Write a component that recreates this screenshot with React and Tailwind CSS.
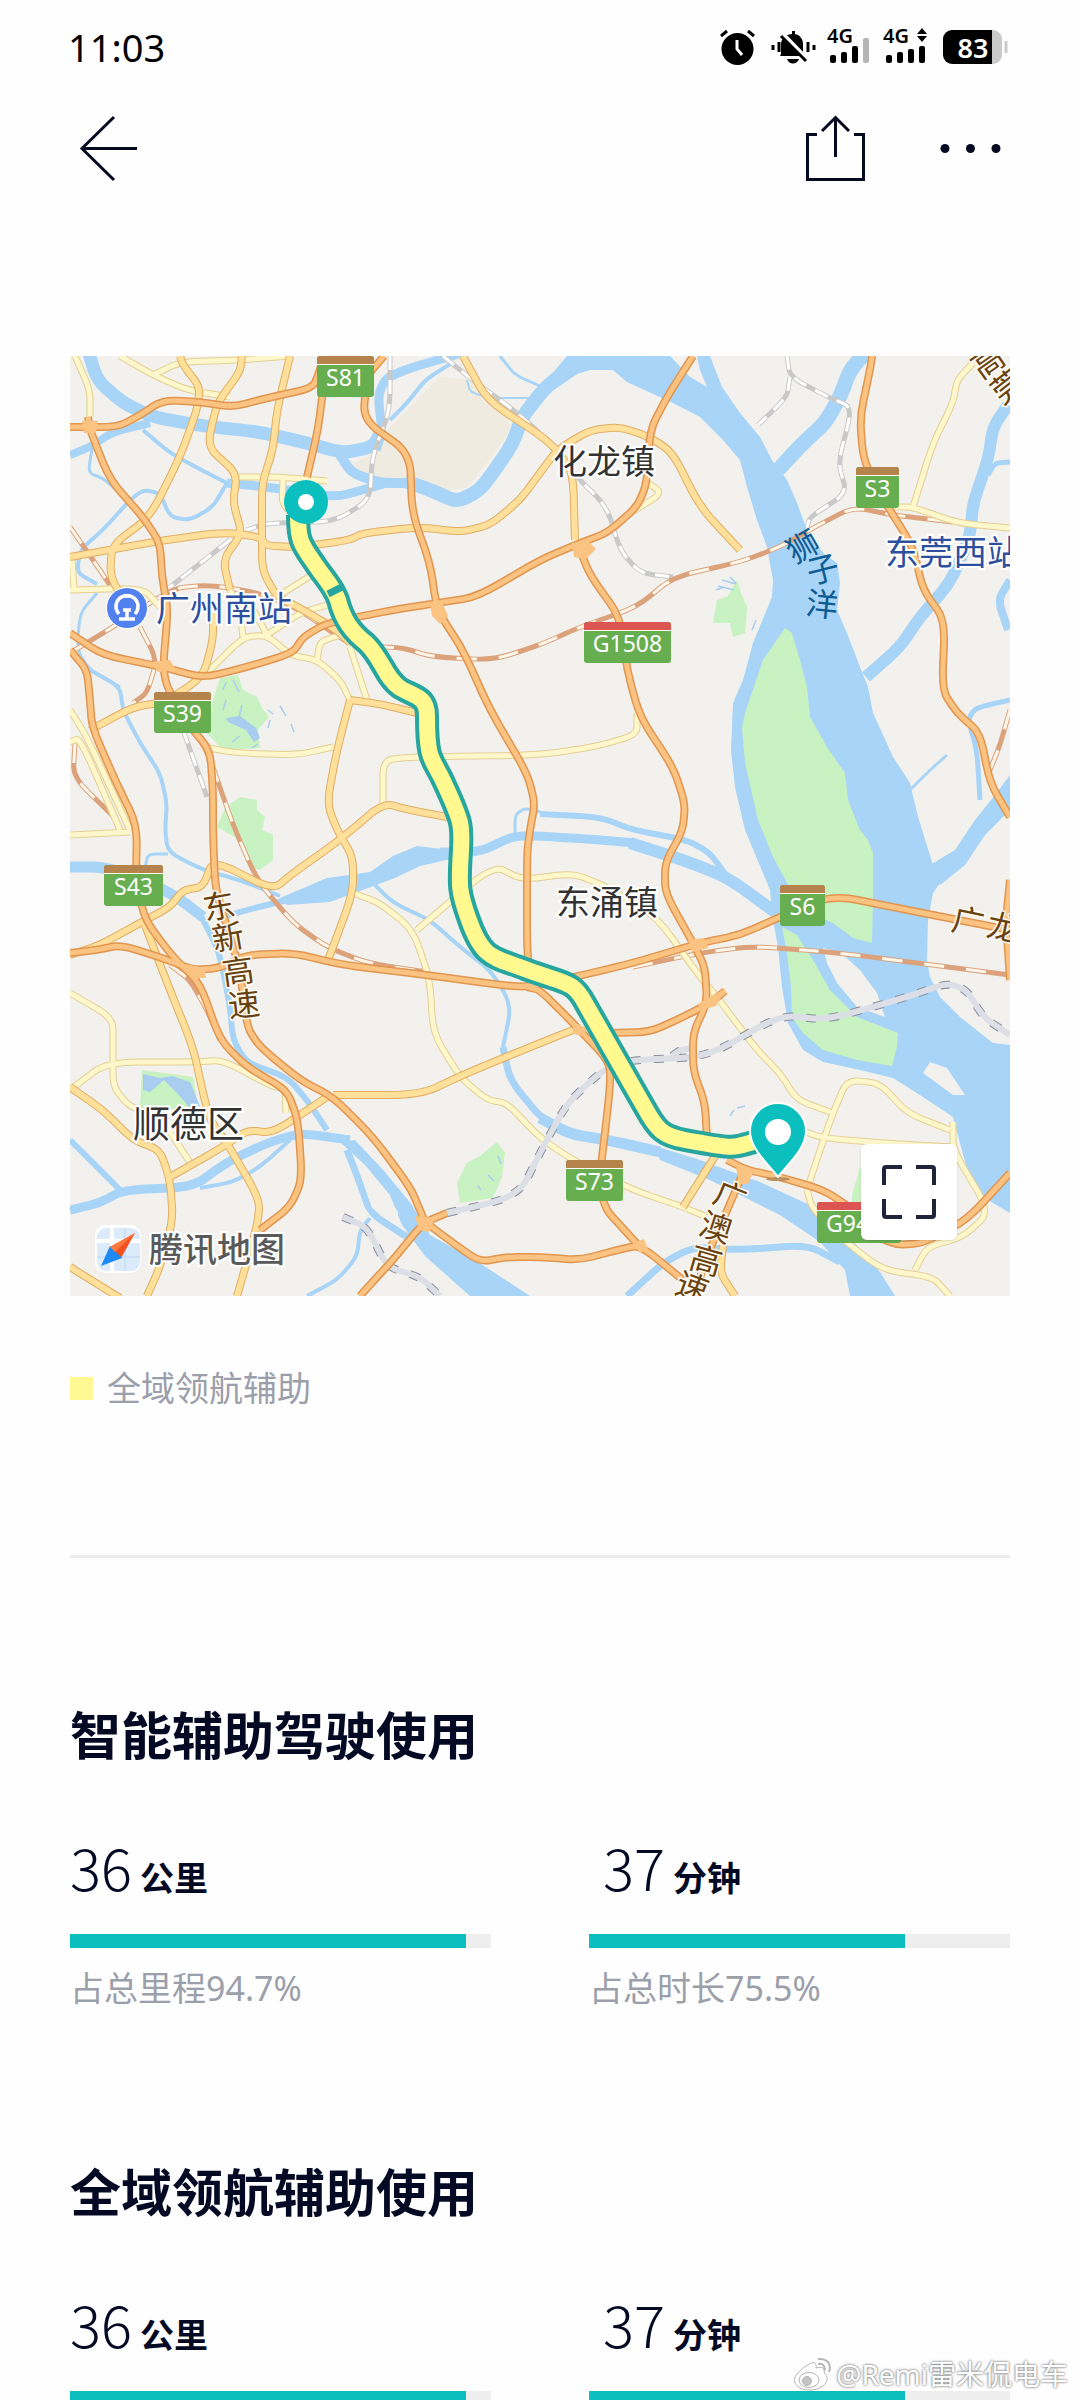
const FONT = "font-['Noto_Sans','Noto_Sans_CJK_SC',sans-serif]";

const WATER_AREAS = [
    // main estuary
    "567,356 540,388 545,396 583,370 613,370 627,382 673,403 700,417 723,440 740,460 747,487 757,520 767,547 773,580 772,597 753,643 743,680 733,703 731,750 735,787 745,830 770,890 773,920 778,947 782,987 788,1023 803,1050 823,1062 860,1070 893,1078 923,1097 953,1117 960,1143 970,1180 983,1197 1010,1213 1010,1045 993,1043 960,1017 940,997 930,977 927,960 928,920 933,893 942,880 933,865 923,833 917,813 910,783 893,757 873,713 868,687 860,667 847,633 837,610 840,583 837,563 823,553 807,530 797,503 787,480 773,462 760,437 740,413 722,387 710,356 697,356 700,370 707,387 690,377 670,356",
    "1010,775 995,795 975,820 955,850 930,865 940,885 965,865 985,835 1010,810",
    "340,1142 355,1140 385,1172 412,1205 430,1235 475,1260 530,1296 470,1296 425,1256 402,1225 390,1195 365,1165",
    "655,1146 700,1160 760,1182 812,1206 850,1238 880,1272 895,1296 850,1296 845,1270 820,1242 780,1215 710,1180 660,1160",
    "370,872 393,856 417,846 450,850 455,858 420,866 395,878 330,902 287,905 280,898 327,878",
];

const RIVERS = [
    { w: 13, pts: "88,350 97,380 123,403 153,417 203,426 260,432 307,443 343,453 373,447 382,430" },
    { w: 9,  pts: "376,450 382,432 378,395 386,378 410,368 445,358 470,350" },
    { w: 4,  pts: "390,420 408,402 425,380 450,364" },
    { w: 10, pts: "340,455 352,473 380,483 413,483" },
    { w: 14, pts: "405,481 433,491 457,502 480,490 497,467 513,443 522,417 545,388 567,370 592,362" },
    { w: 8,  pts: "70,455 90,447 113,432 150,423" },
    { w: 4,  pts: "143,430 170,453 207,473 227,483" },
    { w: 9,  pts: "227,483 267,487 300,492 337,497 373,487 390,482" },
    { w: 4,  pts: "227,483 213,507 190,520 170,517 160,493 143,490 130,500 103,530 80,550 77,573 97,584" },
    { w: 3,  pts: "93,443 88,473 103,478 127,500" },
    { w: 3,  pts: "97,593 80,613 77,650 90,670 120,687" },
    { w: 4,  pts: "90,670 120,687 123,710 140,743 160,773 167,803 165,830 168,852 203,870 240,880 280,896" },
    { w: 3,  pts: "145,868 148,854 168,854" },
    { w: 11, pts: "70,867 103,867 140,878 177,897 203,917" },
    { w: 6,  pts: "200,914 217,947 223,970 230,1007 233,1040 247,1063 287,1077 307,1100 327,1130" },
    { w: 6,  pts: "223,917 247,910 287,900" },
    { w: 9,  pts: "440,852 480,852 513,836 540,836 600,840 635,843" },
    { w: 12, pts: "630,843 683,860 727,877 775,912" },
    { w: 3,  pts: "515,835 515,815 525,808 540,812" },
    { w: 6,  pts: "540,814 600,817 633,830 687,840 710,853 728,878" },
    { w: 4,  pts: "370,880 393,903 430,920 460,947 490,970 507,997 510,1013 503,1047" },
    { w: 7,  pts: "503,1047 510,1080 540,1117 560,1128" },
    { w: 11, pts: "540,1118 570,1134 607,1140 660,1152" },
    { w: 7,  pts: "627,1296 663,1263 693,1247 740,1250 807,1245 840,1262" },
    { w: 6,  pts: "70,1140 93,1163 120,1190" },
    { w: 9,  pts: "70,1210 100,1203 123,1190 193,1187 227,1162 267,1143 300,1133 350,1140" },
    { w: 4,  pts: "200,1188 233,1182 260,1167 290,1140" },
    { w: 7,  pts: "347,1150 360,1183 370,1213 407,1237" },
    { w: 4,  pts: "370,1218 360,1230 357,1257 337,1280 307,1296" },
    { w: 15, pts: "866,352 850,370 840,397 825,423 803,443 778,470" },
    { w: 12, pts: "1008,405 993,427 988,460 973,503 970,537 950,583 920,617 900,647 866,677" },
    { w: 5,  pts: "1010,462 995,463 988,475" },
    { w: 8,  pts: "1010,580 998,600 1008,630" },
    { w: 5,  pts: "1010,700 975,708 968,720 977,750 980,800" },
    { w: 3,  pts: "947,755 930,770 910,790" },
    { w: 3,  pts: "500,356 515,375 540,386" },
    { w: 2,  pts: "467,380 470,392 490,398 540,398" },
];

const PARKS = [
    "785,628 792,633 800,660 807,687 810,717 827,747 845,773 848,800 860,830 868,840 873,853 873,900 872,943 853,938 833,923 803,910 787,883 773,857 758,820 745,763 742,727 745,713 763,660",
    "782,927 797,935 813,960 830,990 857,1017 898,1033 897,1047 892,1066 857,1060 823,1050 803,1033 792,1017 791,987 787,953",
    "220,678 238,675 243,690 257,697 262,708 269,717 258,730 260,748 223,750 207,733 213,700",
    "240,797 257,800 257,810 265,817 262,830 273,835 273,860 260,870 250,867 240,840 217,827 225,808",
    "142,1070 193,1077 198,1107 160,1110 140,1107",
    "497,1142 505,1153 502,1177 493,1198 460,1203 457,1183 467,1163 480,1156",
    "737,580 742,596 747,607 745,633 733,637 730,623 713,623 717,600 728,596",
    "860,1168 852,1195 852,1205 880,1205 880,1168",
];

const ISLANDS = [
    "823,948 840,952 860,970 877,993 885,1017 857,1007 837,983 827,963",
    "930,1062 947,1068 965,1095 953,1095 923,1073",
    "358,1168 372,1176 398,1212 398,1221 372,1208",
];

const PONDS = [
    "143,1074 160,1078 172,1076 190,1082 200,1106 190,1108 178,1094 164,1080 150,1092 143,1090",
    "226,718 240,716 256,728 260,738 254,742 246,730 228,722",
];

const MINOR_ROADS = [
    "75,356 90,390 90,417",
    "120,356 153,375 187,390 230,397",
    "153,375 180,362 240,360 290,356",
    "233,477 280,477 327,481",
    "283,480 282,503 293,515",
    "70,590 143,588 160,607",
    "72,558 74,590",
    "203,677 243,637 267,635 290,655 317,660 340,680 350,700",
    "243,637 240,610 230,590",
    "267,635 258,618 250,605",
    "267,635 300,613 327,605",
    "277,597 315,573",
    "317,660 320,642 337,636",
    "350,647 367,700",
    "203,747 237,753 297,755 333,747",
    "383,803 383,760 413,757 540,755 593,747 637,735 637,713",
    "70,710 87,737 130,830",
    "70,742 80,738 120,830",
    "70,835 130,832",
    "70,993 113,1018 113,1050 113,1087 130,1107 160,1117 193,1167",
    "70,1090 107,1062 197,1062 223,1060 273,1087 285,1087 286,1113",
    "350,892 380,903 413,930 430,980 433,1033 460,1077 487,1100 507,1103 540,1138 573,1160 633,1190 683,1207 707,1217",
    "417,930 493,865 523,880 573,873 607,887 657,917 697,973 717,997 757,1050 780,1073 797,1100 833,1113",
    "807,1190 820,1150 833,1113 847,1080 880,1083 907,1113 950,1130",
    "800,1130 823,1138 883,1143 953,1147",
    "953,1122 953,1150 990,1212 963,1237 927,1247 915,1270",
    "807,1190 812,1208 847,1243 883,1270 933,1277 950,1296",
    "973,363 957,380 953,403 933,443 913,507",
    "890,507 913,507 957,523 1010,528",
    "630,513 663,493 643,480",
];

const MAIN_ROADS = [
    "143,920 168,985 193,1047 203,1093 210,1120 227,1143 260,1200 257,1227 237,1296",
    "70,1087 103,1110 133,1140 160,1150 170,1180 173,1220 160,1267 147,1296",
    "170,1177 223,1147 247,1130 273,1133 327,1097",
    "333,1095 420,1095 467,1073 540,1043 573,1030",
    "70,955 100,945 140,923 170,907 183,890 203,887 213,860 273,890 293,873 340,840 383,803 410,810 447,817",
    "350,700 337,750 327,803 337,830 353,857 353,893 327,963",
    "350,700 380,704 417,713",
    "70,557 153,542 223,532 260,537 267,546 300,547 350,540 363,533 420,527 460,532 490,525 520,500 540,473 557,450 590,430 620,427 650,437 673,453 700,507 740,550",
    "180,356 183,365 200,387 197,410 180,457 150,517 112,545 110,577 130,610",
    "242,356 240,372 217,403 207,447 237,473 233,503 242,533 223,560 230,590",
    "290,356 277,410 273,450 262,483 262,530 262,570 277,597 300,608 337,630 350,643",
    "463,356 487,400 540,435 557,450 573,473 575,540",
    "90,730 133,707 165,702 203,677 213,640 213,613",
    "717,1153 683,1207",
    "723,1245 720,1273 735,1296",
    "70,1267 120,1298",
];

const HIGHWAYS = [
    "70,427 117,427 137,417 163,400 200,402 233,407 267,398 313,388 320,370 325,350",
    "323,390 318,430 307,477",
    "88,417 90,430 110,480 143,517 160,543 162,577 168,610 163,667 167,687 187,723 210,750 213,790 213,830 215,887 227,927 240,970 247,1027 260,1047 300,1080 333,1097 373,1137 410,1187 420,1210 425,1222 453,1243 480,1262 507,1257 540,1257 580,1260 617,1250 640,1245 683,1280",
    "447,1213 423,1223 393,1260 378,1276 360,1296",
    "70,633 103,655 163,667 203,678 247,667 293,653 303,637 327,623 393,610 437,603 477,597 540,560 580,543 607,533 637,507 647,483 650,430 667,397 693,356",
    "384,356 367,376 363,420 410,453 412,513 430,563 437,610 463,650 490,710 527,773 535,803 530,830 527,853 527,955 532,984",
    "527,987 540,990 573,1023 610,1062 610,1090 597,1200 640,1247",
    "580,550 590,575 620,617 627,670 640,717 673,767 685,803 683,830 665,863 665,893 693,943 705,967 707,1003 693,1033 693,1070 705,1103 707,1140",
    "70,953 97,950 120,945 160,957 193,970 220,968 247,955 293,953 343,965 427,975 500,985 527,987 583,975 633,963 700,943 740,935 780,917 833,895 907,910 1010,930",
    "70,650 87,670 90,700 92,727 115,780 137,825 136,880 145,920 173,957 200,983 220,1040 247,1067 287,1090 298,1120 302,1180 290,1207 260,1230",
    "873,350 870,370 860,417 863,457 877,490 890,510 913,547 923,590 945,620 942,690 957,713 980,733 990,783 1010,817",
    "1010,880 1006,920 1010,980",
    "727,1160 747,1170 780,1177 823,1190 850,1207 873,1235 897,1245 923,1243 967,1220 1010,1173",
    "743,1173 723,1220 705,1260 695,1296",
    "610,1033 650,1032 683,1017 710,1003 725,991",
];

const RAILS = [
    "70,527 93,560 110,585",
    "70,653 113,627 173,588 210,585 260,593 300,610 353,647 400,647 433,657 493,660 540,645 580,627 637,607 673,577 740,562 780,547 813,528 853,507 893,515 953,522",
    "140,627 157,660 147,693 133,703",
    "75,743 73,777 117,820",
    "190,727 207,750 233,825 257,880 293,923 327,947 367,963 427,972",
    "633,967 700,953 753,946 840,953 1010,975",
    "170,965 190,980 207,1010 220,1040",
    "1010,710 1000,745 990,770",
];

const GRAY_RAILS = [
    "787,356 790,377 830,398 848,405 850,417 838,463 847,493 810,517 807,527",
    "790,377 787,397 758,425",
    "443,356 475,382 510,407 540,433 577,477 607,507 620,550 640,573 673,577",
    "390,356 390,410 372,457 370,500 333,522 267,523 247,530",
    "230,540 170,587",
    "183,730 207,797",
];

const METRO = [
    "447,1213 503,1200 523,1187 540,1153 567,1103 603,1070 630,1060 707,1057 780,1015 827,1020 907,997 947,983 967,990 983,1017 1010,1035",
    "343,1217 367,1227 387,1267 420,1277 440,1296",
    "672,1056 680,1050 693,1048",
];

const ROUTE =
    "M298 515C298 543 302 545 317 567C326 580 333 586 338 600C343 620 352 632 366 643C382 658 385 678 400 688C415 697 427 696 427 716C427 765 433 757 445 785C463 824 462 826 461 850C459 885 458 890 469 920C483 960 494 957 525 969C565 984 573 980 585 1003L645 1108C657 1130 663 1136 685 1140C740 1150 728 1150 778 1134";

const SHIELDS = [
    { x: 317, y: 356, w: 57, name: "S81" },
    { x: 154, y: 692, w: 57, name: "S39" },
    { x: 104, y: 865, w: 59, name: "S43" },
    { x: 584, y: 622, w: 87, name: "G1508", national: true },
    { x: 856, y: 467, w: 43, name: "S3" },
    { x: 780, y: 885, w: 45, name: "S6" },
    { x: 566, y: 1160, w: 57, name: "S73" },
    { x: 817, y: 1202, w: 84, name: "G94", national: true },
];

const PLACES = [
    { x: 553,  y: 474,  size: 34, fill: "#333333", name: "化龙镇" },
    { x: 556,  y: 915,  size: 34, fill: "#333333", name: "东涌镇" },
    { x: 133,  y: 1138, size: 37, fill: "#333333", name: "顺德区" },
    { x: 156,  y: 621,  size: 34, fill: "#2d4f9e", name: "广州南站" },
    { x: 885,  y: 565,  size: 34, fill: "#2d4f9e", name: "东莞西站" },
];

// characters set one by one along a road or river: [x, y, angle, char]
const PATH_LABELS = [
    { fill: "#0f5c92", halo: "none",    chars: [[803, 547, -30, "狮"], [823, 570, -14, "子"], [822, 605, 6, "洋"]] },
    { fill: "#684210", halo: "#fffaf0", chars: [[219, 907, -10, "东"], [228, 938, -10, "新"], [238, 972, -8, "高"], [244, 1005, -6, "速"]] },
    { fill: "#684210", halo: "#fffaf0", chars: [[730, 1197, 22, "广"], [716, 1228, 18, "澳"], [706, 1261, 16, "高"], [692, 1288, 20, "速"]] },
    { fill: "#684210", halo: "#fffaf0", chars: [[968, 922, 12, "广"], [1003, 928, 12, "龙"]] },
    { fill: "#684210", halo: "#fffaf0", chars: [[988, 362, -35, "高"], [1008, 387, -38, "莞"]] },
];

const USAGE = [
    {
        title: "智能辅助驾驶使用",
        stats: [
            { value: 36, unit: "公里", percent: 94, caption: "占总里程94.7%" },
            { value: 37, unit: "分钟", percent: 75, caption: "占总时长75.5%", inset: true },
        ],
    },
    {
        title: "全域领航辅助使用",
        stats: [
            { value: 36, unit: "公里", percent: 94 },
            { value: 37, unit: "分钟", percent: 75, inset: true },
        ],
    },
];

function smooth(points) {
    const p = points.split(" ").map((pair) => pair.split(",").map(Number));
    let d = `M${p[0]}`;
    for (let i = 1; i < p.length - 1; i++) {
        // keep the curve close to each vertex so junctions stay connected
        const before = [p[i][0] * 0.65 + p[i - 1][0] * 0.35, p[i][1] * 0.65 + p[i - 1][1] * 0.35];
        const after  = [p[i][0] * 0.65 + p[i + 1][0] * 0.35, p[i][1] * 0.65 + p[i + 1][1] * 0.35];
        d += `L${before}Q${p[i]} ${after}`;
    }
    return `${d}L${p[p.length - 1]}`;
}

function Lines({ items, color, width, dash }) {
    return (
        <g fill="none" stroke={color} strokeWidth={width} strokeDasharray={dash} strokeLinejoin="round">
            {items.map((pts) => (
                <path key={pts} d={smooth(pts)} />
            ))}
        </g>
    );
}

function Areas({ items, color }) {
    return (
        <g fill={color}>
            {items.map((pts) => (
                <polygon key={pts} points={pts} />
            ))}
        </g>
    );
}

function Shield({ x, y, w, name, national }) {
    return (
        <g>
            <rect x={x} y={y} width={w} height="41" rx="3" fill="#67ae50" />
            <path d={`M${x} ${y + 8}v-5a3 3 0 0 1 3 -3h${w - 6}a3 3 0 0 1 3 3v5z`} fill={national ? "#dc5552" : "#b5844d"} />
            <rect x={x} y={y + 8} width={w} height="1" fill="#fff" />
            <text
                x={name === "G94" ? x + 9 : x + w / 2}
                y={y + 30}
                textAnchor={name === "G94" ? "start" : "middle"}
                fontSize="23"
                fill="#fff"
            >
                {name}
            </text>
        </g>
    );
}

function TripMap() {
    return (
        <svg className="block w-full h-full" viewBox="70 356 940 940" role="img" aria-label="行程路线">
            <rect x="70" y="356" width="940" height="940" fill="#f2f1ed" />
            <polygon
                points="440,377 410,407 387,430 380,450 350,465 373,477 410,480 433,493 467,487 487,463 510,430 507,407 470,380"
                fill="#f0ebe0"
            />

            <Areas items={WATER_AREAS} color="#a8d4f7" />
            <g fill="none" stroke="#a8d4f7" strokeLinejoin="round">
                {RIVERS.map((r) => (
                    <path key={r.pts} d={smooth(r.pts)} strokeWidth={r.w} />
                ))}
            </g>
            <Areas items={PARKS} color="#c8f2c2" />
            <Areas items={ISLANDS} color="#f2f1ed" />
            <Areas items={PONDS} color="#a8cdf0" />
            <g fill="none" stroke="#a8cdf0" strokeWidth="1.5">
                <path d="M226 682l-3 8M233 680l6 12M226 700l-3 10M242 705l-3 12M268 710l5 4M280 706l6 10M291 724l3 8M270 720l-2 8M232 742l8 -6M252 748l6 -4" />
                <path d="M716 590l8 -3M722 580l14 4M718 586l16 4M730 577l6 6M756 620l-4 10M730 1116l4 -6M737 1108l8 -2M488 1175l6 6M478 1186l3 4M498 1156l3 8" />
            </g>

            {/* Rail lines */}
            <Lines items={GRAY_RAILS} color="#c9c9c9" width="5" />
            <Lines items={GRAY_RAILS} color="#ffffff" width="3" dash="14 10" />
            <Lines items={RAILS} color="#dba27c" width="5" />
            <Lines items={RAILS} color="#fff6ea" width="3" dash="20 22" />

            {/* Roads, casing first */}
            <Lines items={MINOR_ROADS} color="#e3cf94" width="7" />
            <Lines items={MINOR_ROADS} color="#fef7cb" width="5" />
            <Lines items={MAIN_ROADS} color="#e2ad63" width="8" />
            <Lines items={MAIN_ROADS} color="#fee09b" width="6" />
            <Lines items={METRO} color="#8a90a0" width="8" dash="10 13" />
            <Lines items={METRO} color="#dcdfe5" width="6" />
            <Lines items={HIGHWAYS} color="#e1954f" width="8" />
            <Lines items={HIGHWAYS} color="#fbc381" width="5" />
            <g fill="#fbc381">
                <path d="M572 543l16 -2l8 8l-10 10l-12 -2z" />
                <path d="M430 604l12 -2l6 14l-8 8l-8 -8z" />
                <path d="M152 662l18 -2l6 10l-18 2z" />
                <path d="M415 1216l20 2l-6 14l-10 -2z" />
                <path d="M688 940l16 -2l4 10l-16 4z" />
                <path d="M186 964l18 4l2 10l-12 0z" />
                <path d="M573 1022l14 6l-4 8l-10 -2z" />
                <path d="M698 1004l14 -8l14 -8l-10 18l-14 4z" />
                <path d="M634 1243l10 -4l4 10l-8 4z" />
                <path d="M82 421l16 0l-2 12l-12 0z" />
                <path d="M736 1168l18 2l-6 14l-8 0z" />
            </g>

            {/* Driven route */}
            <g fill="none" strokeLinejoin="round">
                <path d={ROUTE} stroke="#27a69f" strokeWidth="24" />
                <path d={ROUTE} stroke="#fff990" strokeWidth="16" />
                <path d="M328 594l16 -8" stroke="#27a69f" strokeWidth="7" />
            </g>

            <g className={FONT}>
                {PLACES.map((p) => (
                    <text key={p.name} x={p.x} y={p.y} fontSize={p.size} fill={p.fill} stroke="#fff" strokeWidth="4" paintOrder="stroke">
                        {p.name}
                    </text>
                ))}
                {PATH_LABELS.map((label) =>
                    label.chars.map(([x, y, angle, char]) => (
                        <text
                            key={`${char}${x}`}
                            x={x}
                            y={y + 11}
                            transform={`rotate(${angle} ${x} ${y})`}
                            textAnchor="middle"
                            fontSize="32"
                            fill={label.fill}
                            stroke={label.halo}
                            strokeWidth="3"
                            paintOrder="stroke"
                        >
                            {char}
                        </text>
                    ))
                )}
                {SHIELDS.map((s) => (
                    <Shield key={s.name} {...s} />
                ))}
            </g>

            {/* Railway station badge */}
            <circle cx="127" cy="608" r="21" fill="#fff" />
            <circle cx="127" cy="608" r="20" fill="#5081ee" />
            <g fill="none" stroke="#fff" strokeWidth="3.5">
                <path d="M119 614a11 11 0 1 1 16 0" />
                <path d="M119 619h16M127 610v8M123 610h8" />
                <path d="M127 594v4" />
            </g>

            {/* Trip start and end */}
            <circle cx="306" cy="502" r="22" fill="#0cbfbf" />
            <circle cx="306" cy="502" r="8" fill="#fff" />
            <ellipse cx="778" cy="1179" rx="12" ry="2" fill="#b9905f" />
            <path
                d="M778 1177C766 1162 750 1148 750 1131a28 28 0 0 1 56 0C806 1148 790 1162 778 1177Z"
                fill="#0cbfbf"
                stroke="#fff"
                strokeWidth="2"
            />
            <circle cx="778" cy="1132" r="13" fill="#fff" />

            {/* Map provider */}
            <rect x="95" y="1225" width="46" height="48" rx="11" fill="#fff" />
            <rect x="97" y="1228" width="43" height="43" rx="9" fill="#dcebfb" />
            <path d="M112 1228v43M97 1241h43" stroke="#fff" strokeWidth="4" />
            <path d="M125 1228v43M97 1257h43" stroke="#bcd6f5" strokeWidth="1" />
            <path d="M135 1233L110 1247L121 1258Z" fill="#f4511e" />
            <path d="M101 1266L110 1246L122 1258Z" fill="#1e88f5" />
            <path d="M135 1233L110 1247L115 1252Z" fill="#ff7a3c" />
            <text
                className={FONT}
                x="149"
                y="1262"
                fontSize="34"
                fontWeight="500"
                fill="#5a5a5a"
                stroke="#fff"
                strokeWidth="4"
                paintOrder="stroke"
            >
                腾讯地图
            </text>
        </svg>
    );
}

function StatusBar() {
    return (
        <div className="flex h-[94px] items-center justify-between pl-[68px] pr-[71px]">
            <span className="text-[38px] leading-[48px] text-black">11:03</span>
            <svg className={`h-[60px] w-[290px] ${FONT}`} viewBox="719 17 290 60">
                {/* alarm */}
                <circle cx="737.5" cy="49" r="16" />
                <path d="M721 36l6 -5M754 36l-6 -5" stroke="#000" strokeWidth="3" />
                <path d="M737 40v9l5 6" fill="none" stroke="#fff" strokeWidth="3" />
                {/* muted bell */}
                <path d="M781 54V44c0 -5 5 -10 12 -10s10 5 10 10v9l2 3h-25z" />
                <path d="M792 31h3v5h-3zM787 59h12c-2 6 -10 6 -12 0z" />
                <path d="M783 34l25 26" stroke="#fff" strokeWidth="4" />
                <path d="M781 36l25 25" stroke="#000" strokeWidth="3" />
                <path d="M773 45v5M779 42v10M808 42v10M814 45v5" stroke="#000" strokeWidth="3" />
                {/* signal 1 */}
                <text x="827" y="43" fontSize="20" fontWeight="600">4G</text>
                <rect x="830" y="55" width="6" height="8" rx="2" />
                <rect x="841" y="52" width="6" height="11" rx="2" />
                <rect x="852" y="46" width="6" height="17" rx="2" />
                <rect x="863" y="38" width="6" height="25" rx="2" fill="#b5b5b5" />
                {/* signal 2 */}
                <text x="883" y="43" fontSize="20" fontWeight="600">4G</text>
                <rect x="886" y="55" width="6" height="8" rx="2" />
                <rect x="897" y="52" width="6" height="11" rx="2" />
                <rect x="908" y="49" width="6" height="14" rx="2" />
                <rect x="919" y="46" width="6" height="17" rx="2" />
                <path d="M922 28l5 6h-10zM922 42l5 -6h-10z" />
                {/* battery */}
                <path d="M992 30h1a9 9 0 0 1 9 9v16a9 9 0 0 1 -9 9h-1z" fill="#cacaca" />
                <path d="M952 30h40v34h-40a9 9 0 0 1 -9 -9v-16a9 9 0 0 1 9 -9z" />
                <path d="M1006 41v12" stroke="#cacaca" strokeWidth="3" />
                <text x="973" y="58" textAnchor="middle" fontSize="27" fontWeight="600" fill="#fff">83</text>
            </svg>
        </div>
    );
}

function NavBar() {
    return (
        <header className="flex h-[108px] items-center justify-between px-[70px]">
            <button type="button" aria-label="返回">
                <svg className="h-20 w-20" viewBox="71 108 80 80" fill="none" stroke="#050a20" strokeWidth="3">
                    <path d="M115 117L83 148.500L115 180M83 148.500H138" />
                </svg>
            </button>
            <div className="flex items-center gap-[60px]">
                <button type="button" aria-label="分享">
                    <svg className="h-20 w-20" viewBox="796 108 80 80" fill="none" stroke="#050a20" strokeWidth="3">
                        <path d="M817 134.500H807.500V179.500H863.500V134.500H854" />
                        <path d="M835.500 157V118M822 131L835.500 117.500L849 131" />
                    </svg>
                </button>
                <button type="button" aria-label="更多">
                    <svg className="h-20 w-[74px]" viewBox="936 108 74 80" fill="#050a20">
                        <circle cx="945" cy="148.500" r="4.500" />
                        <circle cx="970.500" cy="148.500" r="4.500" />
                        <circle cx="996" cy="148.500" r="4.500" />
                    </svg>
                </button>
            </div>
        </header>
    );
}

function Stat({ value, unit, percent, caption, inset }) {
    return (
        <div>
            <p className={`flex h-16 items-baseline gap-2 leading-[64px] ${inset ? "pl-[14px]" : ""}`}>
                <span className="font-['Noto_Sans_CJK_SC',sans-serif] text-[58px] font-light">{value}</span>
                <span className="text-[34px] font-bold">{unit}</span>
            </p>
            <div className="mt-9 h-[14px] bg-[#eeeeef]">
                <div className="h-full bg-[#0cbfbf]" style={{ width: `${percent}%` }} />
            </div>
            {caption && <p className="mt-4 text-[34px] leading-[48px] text-[#9b9fa9]">{caption}</p>}
        </div>
    );
}

function Watermark() {
    return (
        <div className="absolute bottom-2 right-3 flex items-center gap-1 text-[28px] leading-[36px] text-white [text-shadow:0_0_3px_#777,0_0_2px_#999]">
            <svg className="h-9 w-10" viewBox="0 0 40 36" fill="#fff" stroke="#b5b5b5" strokeWidth="1">
                <path d="M16 9c5 -4 9 -3 8 3c7 -2 10 1 8 5c8 6 0 17 -14 17C4 34 -1 25 5 18c3 -4 7 -7 11 -9z" />
                <ellipse cx="17" cy="24" rx="10" ry="7.500" />
                <circle cx="15" cy="25" r="4.500" fill="#c4c4c4" />
                <path d="M26 8c5 -1 8 3 6 7M26 3c9 -1 14 5 11 13" fill="none" strokeWidth="2" />
            </svg>
            <span>@Remi雷米侃电车</span>
        </div>
    );
}

export default function App() {
    return (
        <div className={`relative h-screen overflow-hidden bg-[#fefefe] text-[#050a24] ${FONT}`}>
            <StatusBar />
            <NavBar />

            <main className="px-[70px] pt-[154px]">
                <div className="relative aspect-square w-full overflow-hidden">
                    <TripMap />
                    <button
                        type="button"
                        aria-label="全屏"
                        className="absolute bottom-14 right-[53px] flex h-24 w-24 items-center justify-center rounded-md bg-white shadow-sm"
                    >
                        <svg className="h-14 w-14" viewBox="0 0 56 56" fill="none" stroke="#20243a" strokeWidth="4">
                            <path d="M3 21V5q0 -2 2 -2H21M35 3H51q2 0 2 2V21M53 35V51q0 2 -2 2H35M21 53H5q-2 0 -2 -2V35" />
                        </svg>
                    </button>
                </div>

                <div className="mt-16 flex h-14 items-center gap-[14px]">
                    <span className="h-[23px] w-[23px] bg-[#fff893]" />
                    <span className="text-[34px] leading-[48px] text-[#9b9fa9]">全域领航辅助</span>
                </div>

                <hr className="mt-[139px] border-t-[3px] border-[#ececec]" />

                <div className="mt-[145px] flex flex-col gap-[148px]">
                    {USAGE.map((section) => (
                        <section key={section.title}>
                            <h2 className="text-[51px] font-bold leading-[64px]">{section.title}</h2>
                            <div className="mt-[67px] grid grid-cols-2 gap-[98px]">
                                {section.stats.map((stat) => (
                                    <Stat key={stat.unit} {...stat} />
                                ))}
                            </div>
                        </section>
                    ))}
                </div>
            </main>

            <Watermark />
        </div>
    );
}
